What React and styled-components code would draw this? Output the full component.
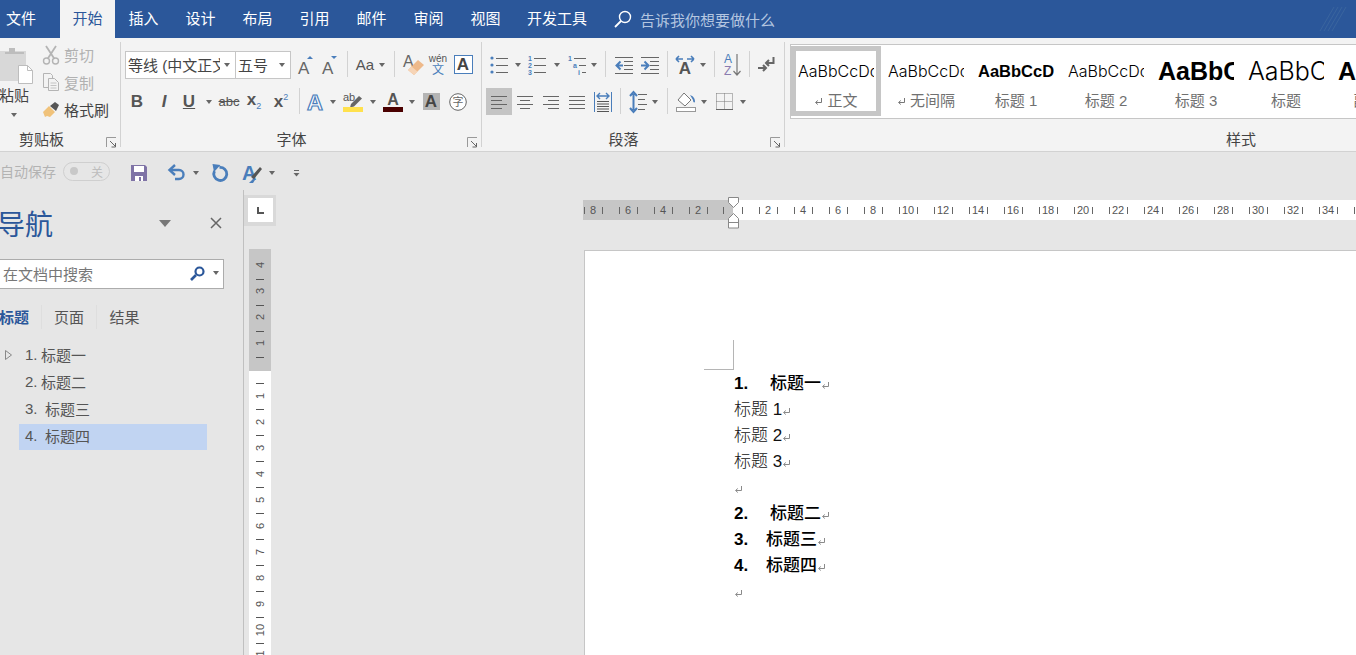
import React from 'react'
import styled, { createGlobalStyle } from 'styled-components'

const BLUE = '#2b579a'
const ICON_BLUE = '#4a7ebb'
const GRAY = '#666'

const Global = createGlobalStyle`
  html, body { margin: 0; padding: 0; background: #e6e6e6; }
  body {
    font-family: "Liberation Sans", "Noto Sans CJK SC", sans-serif;
    font-size: 15px;
    color: #444;
  }
`

const Window = styled.div`
  width: 1356px;
  height: 655px;
  overflow: hidden;
  display: flex;
  flex-direction: column;
  position: relative;
`

/* tab bar */
const TabBar = styled.div`
  height: 38px;
  flex: none;
  background: ${BLUE};
  display: flex;
  align-items: stretch;
  color: #fff;
`
const Tab = styled.div`
  width: ${(p) => p.$w || 57}px;
  flex: none;
  display: flex;
  align-items: center;
  justify-content: center;
  padding-bottom: 4px;
  box-sizing: border-box;
  background: ${(p) => (p.$active ? '#f3f3f3' : 'transparent')};
  color: ${(p) => (p.$active ? BLUE : '#fff')};
`
const TellMe = styled.div`
  display: flex;
  align-items: center;
  gap: 8px;
  margin-left: 14px;
  color: #b4c6e0;
`
const Stripes = styled.div`
  margin-left: auto;
  margin-right: 10px;
  display: flex;
  align-items: center;
`

/* ribbon */
const Ribbon = styled.div`
  height: 114px;
  flex: none;
  box-sizing: border-box;
  background: #f3f3f3;
  border-bottom: 1px solid #d2d2d2;
  display: flex;
`
const Group = styled.div`
  width: ${(p) => p.$w}px;
  margin-left: ${(p) => p.$ml || 0}px;
  flex: none;
  height: 113px;
  box-sizing: border-box;
  padding-left: ${(p) => p.$pl ?? 4}px;
  position: relative;
  display: flex;
  flex-direction: column;
  &::after {
    content: '';
    position: absolute;
    right: 0;
    top: 4px;
    bottom: 4px;
    width: 1px;
    background: #d2d2d2;
  }
`
const GroupBody = styled.div`
  flex: 1;
  display: flex;
  flex-direction: column;
  gap: 10px;
  padding-top: 13px;
`
const GroupLabel = styled.div`
  flex: none;
  margin-top: auto;
  height: 22px;
  line-height: 21px;
  text-align: center;
  padding-right: ${(p) => p.$pr ?? 20}px;
  color: #444;
  margin-left: -${(p) => p.$pl ?? 4}px;
`
const Launcher = styled.div`
  position: absolute;
  right: 4px;
  bottom: 3px;
  width: 11px;
  height: 11px;
  display: flex;
`
const ToolRow = styled.div`
  height: 27px;
  display: flex;
  align-items: stretch;
`
const Tool = styled.div`
  width: ${(p) => p.$w}px;
  flex: none;
  display: flex;
  align-items: center;
  justify-content: center;
  position: relative;
  background: ${(p) => (p.$active ? '#c4c4c4' : 'transparent')};
  color: #555;
`
const QuickTool = styled(Tool)`
  padding-top: 3px;
`
const Sep = styled.div`
  width: ${(p) => p.$w}px;
  flex: none;
  display: flex;
  justify-content: center;
  &::before {
    content: '';
    width: 1px;
    height: 26px;
    background: #d2d2d2;
  }
`
const Caret = styled.span`
  display: block;
  flex: none;
  width: 0;
  height: 0;
  border-left: 3.5px solid transparent;
  border-right: 3.5px solid transparent;
  border-top: 4px solid ${GRAY};
`
const Combo = styled.div`
  width: ${(p) => p.$w}px;
  height: 28px;
  flex: none;
  box-sizing: border-box;
  background: #fff;
  border: 1px solid #c6c6c6;
  margin-left: ${(p) => (p.$joined ? -1 : 0)}px;
  display: flex;
  align-items: center;
  padding: 0 5px 1px 2px;
  font-size: 15px;
  color: #444;
`
const ComboText = styled.div`
  flex: 1;
  overflow: hidden;
  white-space: nowrap;
  min-width: 0;
  margin-right: 4px;
`
const Glyph = styled.span`
  font-size: ${(p) => p.$size || 17}px;
  font-weight: ${(p) => (p.$bold ? 700 : 400)};
  font-style: ${(p) => (p.$italic ? 'italic' : 'normal')};
  text-decoration: ${(p) => p.$deco || 'none'};
  color: ${(p) => p.$color || '#555'};
  line-height: 1;
  position: relative;
`
const Sub = styled.span`
  font-size: 9px;
  color: ${ICON_BLUE};
  font-weight: 400;
  vertical-align: ${(p) => (p.$up ? 'super' : 'sub')};
`
const BoxedA = styled.div`
  width: 19px;
  height: 19px;
  box-sizing: border-box;
  border: 1.5px solid ${ICON_BLUE};
  display: flex;
  align-items: center;
  justify-content: center;
  font-weight: 700;
  font-size: 17px;
  color: #444;
  background: #fff;
`
const ShadeA = styled.div`
  width: 17px;
  height: 17px;
  display: flex;
  align-items: center;
  justify-content: center;
  background: #b4b4b4;
  font-weight: 700;
  font-size: 17px;
  color: #444;
`
const ColorA = styled.div`
  display: flex;
  flex-direction: column;
  align-items: center;
  font-size: 16px;
  font-weight: 700;
  line-height: 15px;
  color: #555;
  &::after {
    content: '';
    width: 20px;
    height: 5px;
    background: ${(p) => p.$bar};
  }
`
const WenStack = styled.div`
  display: flex;
  flex-direction: column;
  align-items: center;
  line-height: 10px;
  font-size: 10px;
  color: #555;
`
const WenChar = styled.span`
  font-size: 12px;
  line-height: 12px;
  color: ${ICON_BLUE};
`

/* clipboard */
const ClipBody = styled.div`
  flex: 1;
  display: flex;
`
const PasteCol = styled.div`
  width: 56px;
  flex: none;
  display: flex;
  flex-direction: column;
  align-items: center;
  padding-top: 8px;
`
const PasteText = styled.div`
  height: 20px;
  line-height: 20px;
  margin-bottom: 7px;
  color: #444;
`
const ClipCol = styled.div`
  padding-top: 3px;
  display: flex;
  flex-direction: column;
`
const ClipRow = styled.div`
  height: 27.5px;
  display: flex;
  align-items: center;
  gap: 4px;
  color: ${(p) => (p.$off ? '#b1b1b1' : '#444')};
`

/* styles gallery */
const Gallery = styled.div`
  flex: none;
  margin: 6px 0 0 5px;
  height: 75px;
  box-sizing: border-box;
  background: #fff;
  border: 1px solid #c6c6c6;
  display: flex;
  padding-top: 1px;
`
const StyleItem = styled.div`
  width: 90px;
  height: 70px;
  flex: none;
  box-sizing: border-box;
  border: 5px solid ${(p) => (p.$selected ? '#c6c6c6' : 'transparent')};
  padding-top: 5px;
  display: flex;
  flex-direction: column;
  align-items: center;
`
const StylePreview = styled.div`
  width: 76px;
  height: 30px;
  line-height: 30px;
  overflow: hidden;
  white-space: nowrap;
  color: #000;
  font-family: ${(p) => (p.$bold ? '"Liberation Sans"' : 'Inter')}, sans-serif;
  font-size: ${(p) => p.$size}px;
  font-weight: ${(p) => (p.$bold ? 700 : 300)};
`
const StyleName = styled.div`
  margin-top: 5px;
  height: 20px;
  line-height: 20px;
  color: #707070;
  display: flex;
  align-items: center;
  gap: 4px;
`

/* quick access */
const QuickBar = styled.div`
  height: 38px;
  flex: none;
  display: flex;
  align-items: center;
`
const AutoSave = styled.div`
  width: 63px;
  flex: none;
  font-size: 14px;
  color: #b3b3b3;
  white-space: nowrap;
`
const Toggle = styled.div`
  width: 47px;
  height: 19px;
  flex: none;
  box-sizing: border-box;
  border: 1px solid #cfcfcf;
  border-radius: 10px;
  display: flex;
  align-items: center;
  justify-content: space-between;
  padding: 0 6px;
  color: #bdbdbd;
  font-size: 12px;
  &::before {
    content: '';
    width: 8px;
    height: 8px;
    border-radius: 50%;
    background: #c8c8c8;
  }
`

/* main */
const Main = styled.div`
  flex: 1;
  min-height: 0;
  display: flex;
`
const NavPane = styled.div`
  width: 244px;
  flex: none;
  box-sizing: border-box;
  border-right: 1px solid #c0c0c0;
  padding-top: 13px;
  display: flex;
  flex-direction: column;
`
const NavHead = styled.div`
  height: 40px;
  display: flex;
  align-items: center;
`
const NavTitle = styled.div`
  font-size: 28px;
  color: ${BLUE};
  margin-left: -3px;
  width: 162px;
  white-space: nowrap;
`
const NavClose = styled.div`
  margin-left: 39px;
  display: flex;
`
const Search = styled.div`
  margin: 16px 0 0 -1px;
  width: 225px;
  height: 30px;
  box-sizing: border-box;
  background: #fff;
  border: 1px solid #acacac;
  display: flex;
  align-items: center;
  padding: 0 0 2px 3px;
  color: #777;
`
const SearchText = styled.div`
  flex: 1;
`
const SearchBtn = styled.div`
  margin-right: 4px;
  display: flex;
`
const NavTabs = styled.div`
  display: flex;
  margin: 16px 0 0 -13px;
  height: 24px;
`
const NavTab = styled.div`
  width: 55px;
  display: flex;
  align-items: center;
  justify-content: center;
  box-sizing: border-box;
  border-right: 1px solid #dedede;
  padding-bottom: 2px;
  font-weight: ${(p) => (p.$active ? 700 : 400)};
  color: ${(p) => (p.$active ? BLUE : '#555')};
  &:last-child { border-right: 0; }
`
const Tree = styled.div`
  margin-top: 14px;
  display: flex;
  flex-direction: column;
  gap: 1px;
`
const TreeRow = styled.div`
  height: 26px;
  display: flex;
  align-items: center;
`
const Expander = styled.div`
  width: 19px;
  display: flex;
  justify-content: flex-end;
  padding: 0 7px 2px 0;
  box-sizing: border-box;
`
const TreeBody = styled.div`
  width: 188px;
  height: 26px;
  box-sizing: border-box;
  padding: 0 0 4px 6px;
  display: flex;
  align-items: center;
  color: #555;
  background: ${(p) => (p.$selected ? '#c1d4f2' : 'transparent')};
`
const TreeNum = styled.span`
  width: ${(p) => p.$w}px;
  flex: none;
`

const RulerCol = styled.div`
  width: 32px;
  flex: none;
  padding-top: 5px;
  display: flex;
  flex-direction: column;
`
const CornerBox = styled.div`
  width: 32px;
  height: 31px;
  box-sizing: border-box;
  background: #fff;
  border: solid #d9d9d9;
  border-width: 3px 3px 4px 4px;
  display: flex;
  align-items: center;
  justify-content: center;
  &::before {
    content: '';
    width: 5px;
    height: 5px;
    border-left: 2px solid #555;
    border-bottom: 2px solid #555;
  }
`
const VRuler = styled.div`
  margin: 23px 0 0 5px;
  width: 22px;
  flex: 1;
  min-height: 0;
  overflow: hidden;
  display: flex;
  flex-direction: column;
`
const VDark = styled.div`
  height: 122px;
  flex: none;
  background: #c6c6c6;
  padding-top: 5px;
  box-sizing: border-box;
`
const VLight = styled.div`
  flex: 1;
  background: #fff;
  padding-top: 12px;
`
const VCell = styled.div`
  height: 26px;
  display: flex;
  align-items: center;
  justify-content: center;
  position: relative;
  font-size: 11px;
  color: #555;
  &::after {
    content: '';
    position: absolute;
    left: 7px;
    right: 7px;
    bottom: 0;
    height: 1px;
    background: #555;
  }
`
const VNum = styled.span`
  display: block;
  transform: translateY(${(p) => p.$dy}px) rotate(-90deg);
`
const VTick = styled.div`
  height: 1px;
  margin: 0 7px;
  background: #555;
`

const DocArea = styled.div`
  flex: 1;
  min-width: 0;
  padding: 10px 0 0 307px;
  display: flex;
  flex-direction: column;
`
const HRuler = styled.div`
  height: 20px;
  flex: none;
  display: flex;
  position: relative;
  font-size: 11px;
  color: #555;
`
const HDark = styled.div`
  width: 150px;
  flex: none;
  background: #c6c6c6;
  display: flex;
  justify-content: flex-end;
  overflow: hidden;
`
const HLight = styled.div`
  flex: 1;
  min-width: 0;
  background: #fff;
  display: flex;
  overflow: hidden;
`
const HCell = styled.div`
  width: 35px;
  flex: none;
  box-sizing: border-box;
  padding: 0 8px;
  display: flex;
  align-items: center;
  justify-content: space-between;
  &::before, &::after {
    content: '';
    width: 1px;
    height: 7px;
    background: #666;
  }
`
const HalfTick = styled.div`
  width: 17.5px;
  flex: none;
  box-sizing: border-box;
  padding-left: ${(p) => p.$pl}px;
  display: flex;
  align-items: center;
  &::before {
    content: '';
    width: 1px;
    height: 7px;
    background: #666;
  }
`
const Indents = styled.div`
  position: absolute;
  left: 145px;
  top: -3px;
  display: flex;
`
const Page = styled.div`
  flex: 1;
  margin: 30px 0 0 1px;
  box-sizing: border-box;
  background: #fff;
  border: solid #c6c6c6;
  border-width: 1px 0 0 1px;
  padding: 120px 0 0 149px;
  position: relative;
  font-size: 17px;
  color: #111;
`
const CropMark = styled.div`
  position: absolute;
  left: 119px;
  top: 89px;
  width: 29px;
  height: 29px;
  border: solid #b5b5b5;
  border-width: 0 1px 1px 0;
`
const Para = styled.div`
  height: 26px;
  line-height: 26px;
  display: flex;
  align-items: baseline;
  font-weight: ${(p) => (p.$bold ? 500 : 300)};
  color: ${(p) => (p.$bold ? '#000' : '#111')};
`
const ParaNum = styled.span`
  width: ${(p) => p.$w}px;
  flex: none;
  font-weight: 700;
`
const MarkWrap = styled.span`
  display: flex;
  align-self: center;
  margin: 2px 0 0 0;
`

/* drawings */
const Svg = ({ w, h, vb, children }) => (
  <svg width={w} height={h} viewBox={vb || `0 0 ${w} ${h}`} style={{ display: 'block', flex: 'none', overflow: 'visible' }}>
    {children}
  </svg>
)

const ReturnMark = ({ color = '#8a8a8a' }) => (
  <Svg w={9} h={9}>
    <path d="M7.5 1v4.5H2M3.8 3.5 1.5 5.5l2.3 2" fill="none" stroke={color} strokeWidth="1" />
  </Svg>
)

const LauncherIcon = () => (
  <Svg w={11} h={11}>
    <path d="M.5 10V.5H10" fill="none" stroke="#999" />
    <path d="M4 4l5 5M9.5 6v4h-4" fill="none" stroke="#666" />
  </Svg>
)

const Lines = ({ items, color = GRAY }) =>
  items.map(([x1, x2, y], i) => <path key={i} d={`M${x1} ${y}H${x2}`} stroke={color} strokeWidth="1" />)

const PasteIcon = () => (
  <Svg w={48} h={40} vb="-10 45 48 40">
    <rect x="-8" y="50" width="34" height="30" fill="#d8d8d8" />
    <path d="M5 51h4v-4h6v4h9v2H5z" fill="#bdbdbd" />
    <path d="M18.5 64.5h9l5 5v13h-14z" fill="#fff" stroke="#bdbdbd" />
    <path d="M27.500 64.500v5h5" fill="none" stroke="#bdbdbd" />
  </Svg>
)
const ScissorsIcon = () => (
  <Svg w={18} h={20}>
    <path d="M4 1l8.500 13M14 1L5.500 14" fill="none" stroke="#b4b4b4" strokeWidth="1.800" />
    <circle cx="4.500" cy="16" r="3" fill="none" stroke="#b4b4b4" strokeWidth="1.400" />
    <circle cx="13.500" cy="16" r="3" fill="none" stroke="#b4b4b4" strokeWidth="1.400" />
  </Svg>
)
const CopyIcon = () => (
  <Svg w={18} h={20}>
    <path d="M1.500 1.500h7l2 2v12h-9z" fill="#f3f3f3" stroke="#b4b4b4" />
    <path d="M6.500 6.500h6l4 4v8h-10z" fill="#f3f3f3" stroke="#b4b4b4" />
    <path d="M8.500 11h6M8.500 13.500h6M8.500 16h6" stroke="#c4c4c4" />
  </Svg>
)
const BrushIcon = () => (
  <Svg w={18} h={18}>
    <path d="M1 11l6-6 6 6-5 5-3-1-2 1z" fill="#f0c27a" />
    <path d="M8 5l5-4 4 3-3 6z" fill="#555" />
  </Svg>
)
const SizeA = ({ up }) => (
  <Svg w={19} h={20}>
    <text x="1" y="19" fontFamily="Liberation Sans" fontSize="17" fill="#666">A</text>
    <path d={up ? 'M10 4l3-3 3 3z' : 'M10 1h6l-3 3z'} fill={ICON_BLUE} />
  </Svg>
)
const ClearIcon = () => (
  <Svg w={22} h={24}>
    <text x="0" y="14" fontFamily="Liberation Sans" fontSize="16" fill="#666">A</text>
    <path d="M5 17L15 7l6 5-10 10z" fill="#eeb98a" />
    <path d="M5 17l3.500-3.500 6 5L11 22z" fill="#f6d4b6" />
  </Svg>
)
const OutlineA = () => (
  <Svg w={20} h={22}>
    <text x="0" y="19" fontFamily="Liberation Sans" fontWeight="700" fontSize="22" fill="#fff" stroke={ICON_BLUE} strokeWidth="1.200">A</text>
  </Svg>
)
const HighlightIcon = () => (
  <Svg w={20} h={20}>
    <text x="0" y="9" fontFamily="Liberation Sans" fontSize="11" fill="#555">ab</text>
    <path d="M8 12l8-8 3 2.500-8 8-4 1z" fill="#666" />
    <rect x="0" y="15" width="20" height="5" fill="#ffe14d" />
  </Svg>
)
const CircleChar = () => (
  <Svg w={18} h={18}>
    <circle cx="9" cy="9" r="8.300" fill="#fff" stroke="#666" />
    <text x="9" y="13" textAnchor="middle" fontFamily="Noto Sans CJK SC" fontSize="11" fill="#666">字</text>
  </Svg>
)
const BulletsIcon = () => (
  <Svg w={18} h={20}>
    {[3, 10, 17].map((y) => <circle key={y} cx="2" cy={y} r="1.600" fill={ICON_BLUE} />)}
    <Lines items={[[6, 18, 3.5], [6, 18, 10.5], [6, 18, 17.5]]} />
  </Svg>
)
const SmallLabel = ({ x, y, children }) => (
  <text x={x} y={y} fontFamily="Liberation Sans" fontWeight="700" fontSize="7" fill={ICON_BLUE}>{children}</text>
)
const NumberedIcon = () => (
  <Svg w={18} h={20}>
    <SmallLabel x="0" y="6">1</SmallLabel>
    <SmallLabel x="0" y="13">2</SmallLabel>
    <SmallLabel x="0" y="20">3</SmallLabel>
    <Lines items={[[6, 18, 3.5], [6, 18, 10.5], [6, 18, 17.5]]} />
  </Svg>
)
const MultiIcon = () => (
  <Svg w={18} h={20}>
    <SmallLabel x="0" y="6">1</SmallLabel>
    <SmallLabel x="5" y="13">a</SmallLabel>
    <SmallLabel x="10" y="20">i</SmallLabel>
    <Lines items={[[6, 18, 3.5], [11, 18, 10.5], [14, 18, 17.5]]} />
  </Svg>
)
const IndentIcon = ({ out }) => (
  <Svg w={18} h={18}>
    <Lines items={[[0, 18, 1.5], [9, 18, 5.5], [9, 18, 9.5], [9, 18, 13.5], [0, 18, 17.5]]} />
    <path d={out ? 'M8 9.500H2M5.500 5.500l-4 4 4 4' : 'M0 9.500h6M3.500 5.500l4 4-4 4'} fill="none" stroke={ICON_BLUE} strokeWidth="2" />
  </Svg>
)
const DirectionIcon = () => (
  <Svg w={20} h={20}>
    <path d="M1 4h7M1 4l3-3M1 4l3 3M19 4h-7M19 4l-3-3M19 4l-3 3" fill="none" stroke={ICON_BLUE} strokeWidth="1.600" />
    <text x="10" y="19" textAnchor="middle" fontFamily="Liberation Sans" fontWeight="700" fontSize="17" fill="#555">A</text>
  </Svg>
)
const SortIcon = () => (
  <Svg w={18} h={24}>
    <text x="0" y="10" fontFamily="Liberation Sans" fontSize="12" fill={ICON_BLUE}>A</text>
    <text x="0" y="22" fontFamily="Liberation Sans" fontSize="12" fill="#8a7cb0">Z</text>
    <path d="M13 1v21M9.500 18l3.500 4 3.500-4" fill="none" stroke="#777" strokeWidth="1.200" />
  </Svg>
)
const ReturnTool = () => (
  <Svg w={17} h={15}>
    <path d="M15.500 0v6H8M11 3L8 6l3 3" fill="none" stroke="#666" strokeWidth="2" />
    <path d="M0 11h7M5 8l3 3-3 3" fill="none" stroke="#666" strokeWidth="2" />
  </Svg>
)
const AlignIcon = ({ kind }) => {
  const rows = {
    left: [[0, 16, 2.5], [0, 11, 6.500], [0, 16, 10.500], [0, 11, 14.500]],
    center: [[0, 16, 2.500], [3, 13, 6.500], [0, 16, 10.500], [3, 13, 14.500]],
    right: [[0, 16, 2.500], [5, 16, 6.500], [0, 16, 10.500], [5, 16, 14.500]],
    just: [[0, 16, 2.500], [0, 16, 6.500], [0, 16, 10.500], [0, 16, 14.500]],
  }
  return (
    <Svg w={16} h={16}>
      <Lines items={rows[kind]} color="#666" />
    </Svg>
  )
}
const DistIcon = () => (
  <Svg w={18} h={20}>
    <path d="M.5 0v20M17.500 0v20" stroke={ICON_BLUE} />
    <path d="M3 4h12M6 1L3 4l3 3M12 1l3 3-3 3" fill="none" stroke={ICON_BLUE} strokeWidth="1.400" />
    <Lines items={[[3, 15, 9.500], [3, 15, 12], [3, 15, 14.500], [3, 15, 17], [3, 15, 19.500]]} color="#555" />
  </Svg>
)
const SpacingIcon = () => (
  <Svg w={17} h={22}>
    <path d="M3.500 3v16M0 5l3.500-4L7 5M0 17l3.500 4L7 17" fill="none" stroke={ICON_BLUE} strokeWidth="2" />
    <Lines items={[[8, 17, 3.500], [8, 15, 8.500], [8, 17, 13.500], [8, 15, 18.500]]} />
  </Svg>
)
const BucketIcon = () => (
  <Svg w={20} h={20}>
    <path d="M8 1l7 7-6 6-7-6z" fill="#fff" stroke="#777" />
    <path d="M14 3c3 1 5 3 5 7-1 1-2 0-2-2-1-2-2-3-3-5z" fill={ICON_BLUE} />
    <rect x=".5" y="15.500" width="19" height="4" fill="#fff" stroke="#999" />
  </Svg>
)
const BordersIcon = () => (
  <Svg w={17} h={17}>
    <path d="M.5 .5h16M.5 .5v16M16.500 .5v16M8.500 .5v16M.5 8.500h16" fill="none" stroke="#777" strokeDasharray="1 1" />
    <path d="M0 16.500h17" stroke="#666" />
  </Svg>
)
const TellGlass = () => (
  <Svg w={18} h={18}>
    <circle cx="11" cy="7" r="5.500" fill="none" stroke="#fff" strokeWidth="1.400" />
    <path d="M7 11l-6 6" stroke="#fff" strokeWidth="1.800" />
  </Svg>
)
const NavGlass = () => (
  <Svg w={15} h={15}>
    <circle cx="9.500" cy="5.500" r="4" fill="none" stroke={BLUE} strokeWidth="2.200" />
    <path d="M6 9l-5 5" stroke={BLUE} strokeWidth="2.600" />
  </Svg>
)
const SaveIcon = () => (
  <Svg w={16} h={16}>
    <path d="M0 0h14l2 2v14H0z" fill="#7f73a6" />
    <rect x="3" y="1" width="10" height="6" fill="#fff" />
    <rect x="4" y="11" width="8" height="5" fill="#fff" />
    <rect x="8" y="12" width="2" height="4" fill="#7f73a6" />
  </Svg>
)
const UndoIcon = () => (
  <Svg w={18} h={15}>
    <path d="M2 5h9a4.500 4.500 0 0 1 0 9H7" fill="none" stroke={ICON_BLUE} strokeWidth="2.400" />
    <path d="M7 0L1.500 5 7 10" fill="none" stroke={ICON_BLUE} strokeWidth="2.400" />
  </Svg>
)
const RedoIcon = () => (
  <Svg w={16} h={17}>
    <path d="M7.500 3.500A6.500 6.500 0 1 1 2.500 7" fill="none" stroke={ICON_BLUE} strokeWidth="2.800" />
    <path d="M.5 0l8 1L2 8z" fill={ICON_BLUE} />
  </Svg>
)
const FormatAIcon = () => (
  <Svg w={20} h={20}>
    <text x="0" y="17" fontFamily="Liberation Sans" fontWeight="700" fontSize="20" fill={ICON_BLUE}>A</text>
    <path d="M9 14l9-10 2 2-8 10z" fill="#555" />
    <path d="M7 20l4-4 2 1-2 3z" fill={ICON_BLUE} />
  </Svg>
)
const CloseX = () => (
  <Svg w={12} h={12}>
    <path d="M1 1l10 10M11 1L1 11" stroke="#666" strokeWidth="1.500" />
  </Svg>
)
const MenuMore = () => (
  <Svg w={7} h={8}>
    <path d="M1 1.500h5" stroke={GRAY} />
    <path d="M.5 4h6L3.500 7.500z" fill={GRAY} />
  </Svg>
)
const TreeArrow = () => (
  <Svg w={7} h={10}>
    <path d="M.5 .5l6 4.500-6 4.500z" fill="none" stroke="#888" />
  </Svg>
)
const NavMenu = () => (
  <Svg w={12} h={7}>
    <path d="M0 0h12L6 7z" fill="#777" />
  </Svg>
)
const IndentMarkers = () => (
  <Svg w={12} h={32}>
    <path d="M.5 .5h10v5l-5 5-5-5z" fill="#fff" stroke="#888" />
    <path d="M5.500 16.500l5 5v9.500H.5v-9.500z" fill="#fff" stroke="#888" />
    <path d="M.5 25.500h10" stroke="#888" />
  </Svg>
)
const TitleStripes = () => (
  <Svg w={26} h={24}>
    {[0, 4, 8, 12].map((d) => (
      <path key={d} d={`M${d} 24L${d + 14} 0`} stroke="#3a659f" strokeWidth="1" />
    ))}
  </Svg>
)

const tabs = ['插入', '设计', '布局', '引用', '邮件', '审阅', '视图']
const styleItems = [
  { name: '正文', size: 16, mark: true, selected: true },
  { name: '无间隔', size: 16, mark: true },
  { name: '标题 1', size: 16.500, bold: true },
  { name: '标题 2', size: 16 },
  { name: '标题 3', size: 25, bold: true },
  { name: '标题', size: 25 },
  { name: '副标题', size: 25, bold: true },
]
const hNumbers = Array.from({ length: 18 }, (_, i) => (i + 1) * 2)

function App() {
  return (
    <Window>
      <Global />
      <TabBar>
        <Tab $w={42}>文件</Tab>
        <Tab $w={18} />
        <Tab $w={55} $active>开始</Tab>
        {tabs.map((t) => <Tab key={t}>{t}</Tab>)}
        <Tab $w={86}>开发工具</Tab>
        <TellMe>
          <TellGlass />
          <span>告诉我你想要做什么</span>
        </TellMe>
        <Stripes><TitleStripes /></Stripes>
      </TabBar>

      <Ribbon>
        <Group $w={141} $ml={-20} $pl={6}>
          <ClipBody>
            <PasteCol>
              <PasteIcon />
              <PasteText>粘贴</PasteText>
              <Caret />
            </PasteCol>
            <ClipCol>
              <ClipRow $off><ScissorsIcon />剪切</ClipRow>
              <ClipRow $off><CopyIcon />复制</ClipRow>
              <ClipRow><BrushIcon />格式刷</ClipRow>
            </ClipCol>
          </ClipBody>
          <GroupLabel $pl={6} $pr={18}>剪贴板</GroupLabel>
          <Launcher><LauncherIcon /></Launcher>
        </Group>

        <Group $w={361}>
          <GroupBody>
            <ToolRow>
              <Combo $w={111}>
                <ComboText>等线 (中文正文)</ComboText>
                <Caret />
              </Combo>
              <Combo $w={56} $joined>
                <ComboText>五号</ComboText>
                <Caret />
              </Combo>
              <Tool $w={30}><SizeA up /></Tool>
              <Tool $w={18}><SizeA /></Tool>
              <Sep $w={16} />
              <Tool $w={20}><Glyph $size={15}>Aa</Glyph></Tool>
              <Tool $w={14}><Caret /></Tool>
              <Sep $w={10} />
              <Tool $w={30}><ClearIcon /></Tool>
              <Tool $w={18}>
                <WenStack>wén<WenChar>文</WenChar></WenStack>
              </Tool>
              <Tool $w={32}><BoxedA>A</BoxedA></Tool>
            </ToolRow>
            <ToolRow>
              <Tool $w={24}><Glyph $bold>B</Glyph></Tool>
              <Tool $w={30}><Glyph $bold $italic>I</Glyph></Tool>
              <Tool $w={20}><Glyph $bold $deco="underline">U</Glyph></Tool>
              <Tool $w={20}><Caret /></Tool>
              <Tool $w={20}><Glyph $size={13} $deco="line-through">abc</Glyph></Tool>
              <Tool $w={30}><Glyph $bold>x<Sub>2</Sub></Glyph></Tool>
              <Tool $w={24}><Glyph $bold>x<Sub $up>2</Sub></Glyph></Tool>
              <Sep $w={12} />
              <Tool $w={24}><OutlineA /></Tool>
              <Tool $w={8}><Caret /></Tool>
              <Tool $w={32}><HighlightIcon /></Tool>
              <Tool $w={8}><Caret /></Tool>
              <Tool $w={32}><ColorA $bar="#4a0000">A</ColorA></Tool>
              <Tool $w={6}><Caret /></Tool>
              <Tool $w={32}><ShadeA>A</ShadeA></Tool>
              <Tool $w={22}><CircleChar /></Tool>
            </ToolRow>
          </GroupBody>
          <GroupLabel>字体</GroupLabel>
          <Launcher><LauncherIcon /></Launcher>
        </Group>

        <Group $w={303}>
          <GroupBody>
            <ToolRow>
              <Tool $w={26}><BulletsIcon /></Tool>
              <Tool $w={12}><Caret /></Tool>
              <Tool $w={26}><NumberedIcon /></Tool>
              <Tool $w={14}><Caret /></Tool>
              <Tool $w={26}><MultiIcon /></Tool>
              <Tool $w={8}><Caret /></Tool>
              <Sep $w={15} />
              <Tool $w={22}><IndentIcon out /></Tool>
              <Tool $w={30}><IndentIcon /></Tool>
              <Sep $w={4} />
              <Tool $w={32}><DirectionIcon /></Tool>
              <Tool $w={4}><Caret /></Tool>
              <Sep $w={18} />
              <Tool $w={20}><SortIcon /></Tool>
              <Sep $w={12} />
              <Tool $w={22}><ReturnTool /></Tool>
            </ToolRow>
            <ToolRow>
              <Tool $w={26} $active><AlignIcon kind="left" /></Tool>
              <Tool $w={26}><AlignIcon kind="center" /></Tool>
              <Tool $w={26}><AlignIcon kind="right" /></Tool>
              <Tool $w={26}><AlignIcon kind="just" /></Tool>
              <Tool $w={26}><DistIcon /></Tool>
              <Sep $w={8} />
              <Tool $w={28}><SpacingIcon /></Tool>
              <Tool $w={6}><Caret /></Tool>
              <Sep $w={18} />
              <Tool $w={20}><BucketIcon /></Tool>
              <Tool $w={16}><Caret /></Tool>
              <Tool $w={24}><BordersIcon /></Tool>
              <Tool $w={14}><Caret /></Tool>
            </ToolRow>
          </GroupBody>
          <GroupLabel>段落</GroupLabel>
          <Launcher><LauncherIcon /></Launcher>
        </Group>

        <Group $w={930} $pl={0}>
          <Gallery>
            {styleItems.map((s) => (
              <StyleItem key={s.name} $selected={s.selected}>
                <StylePreview $size={s.size} $bold={s.bold}>AaBbCcDd</StylePreview>
                <StyleName>
                  {s.mark && <ReturnMark color="#777" />}
                  {s.name}
                </StyleName>
              </StyleItem>
            ))}
          </Gallery>
          <GroupLabel $pl={0} $pr={18}>样式</GroupLabel>
        </Group>
      </Ribbon>

      <QuickBar>
        <AutoSave>自动保存</AutoSave>
        <Toggle>关</Toggle>
        <QuickTool $w={58}><SaveIcon /></QuickTool>
        <QuickTool $w={18}><UndoIcon /></QuickTool>
        <QuickTool $w={20}><Caret /></QuickTool>
        <QuickTool $w={28}><RedoIcon /></QuickTool>
        <QuickTool $w={8} />
        <QuickTool $w={20}><FormatAIcon /></QuickTool>
        <QuickTool $w={20}><Caret /></QuickTool>
        <QuickTool $w={28}><MenuMore /></QuickTool>
      </QuickBar>

      <Main>
        <NavPane>
          <NavHead>
            <NavTitle>导航</NavTitle>
            <NavMenu />
            <NavClose><CloseX /></NavClose>
          </NavHead>
          <Search>
            <SearchText>在文档中搜索</SearchText>
            <SearchBtn><NavGlass /></SearchBtn>
            <Tool $w={14}><Caret /></Tool>
          </Search>
          <NavTabs>
            <NavTab $active>标题</NavTab>
            <NavTab>页面</NavTab>
            <NavTab>结果</NavTab>
          </NavTabs>
          <Tree>
            <TreeRow>
              <Expander><TreeArrow /></Expander>
              <TreeBody><TreeNum $w={16}>1.</TreeNum>标题一</TreeBody>
            </TreeRow>
            <TreeRow>
              <Expander />
              <TreeBody><TreeNum $w={16}>2.</TreeNum>标题二</TreeBody>
            </TreeRow>
            <TreeRow>
              <Expander />
              <TreeBody><TreeNum $w={20}>3.</TreeNum>标题三</TreeBody>
            </TreeRow>
            <TreeRow>
              <Expander />
              <TreeBody $selected><TreeNum $w={20}>4.</TreeNum>标题四</TreeBody>
            </TreeRow>
          </Tree>
        </NavPane>

        <RulerCol>
          <CornerBox />
          <VRuler>
            <VDark>
              {[4, 3, 2, 1].map((n) => (
                <VCell key={n}><VNum $dy={-2}>{n}</VNum></VCell>
              ))}
            </VDark>
            <VLight>
              <VTick />
              {[1, 2, 3, 4, 5, 6, 7, 8, 9, 10, 11].map((n) => (
                <VCell key={n}><VNum $dy={-1}>{n}</VNum></VCell>
              ))}
            </VLight>
          </VRuler>
        </RulerCol>

        <DocArea>
          <HRuler>
            <HDark>
              {[8, 6, 4, 2].map((n) => <HCell key={n}>{n}</HCell>)}
              <HalfTick $pl={7.5} />
            </HDark>
            <HLight>
              <HalfTick $pl={9} />
              {hNumbers.map((n) => <HCell key={n}>{n}</HCell>)}
            </HLight>
            <Indents><IndentMarkers /></Indents>
          </HRuler>
          <Page>
            <CropMark />
            <Para $bold><ParaNum $w={36}>1.</ParaNum>标题一<MarkWrap><ReturnMark /></MarkWrap></Para>
            <Para>标题 1<MarkWrap><ReturnMark /></MarkWrap></Para>
            <Para>标题 2<MarkWrap><ReturnMark /></MarkWrap></Para>
            <Para>标题 3<MarkWrap><ReturnMark /></MarkWrap></Para>
            <Para><MarkWrap><ReturnMark /></MarkWrap></Para>
            <Para $bold><ParaNum $w={36}>2.</ParaNum>标题二<MarkWrap><ReturnMark /></MarkWrap></Para>
            <Para $bold><ParaNum $w={32}>3.</ParaNum>标题三<MarkWrap><ReturnMark /></MarkWrap></Para>
            <Para $bold><ParaNum $w={32}>4.</ParaNum>标题四<MarkWrap><ReturnMark /></MarkWrap></Para>
            <Para><MarkWrap><ReturnMark /></MarkWrap></Para>
          </Page>
        </DocArea>
      </Main>
    </Window>
  )
}

export default App
